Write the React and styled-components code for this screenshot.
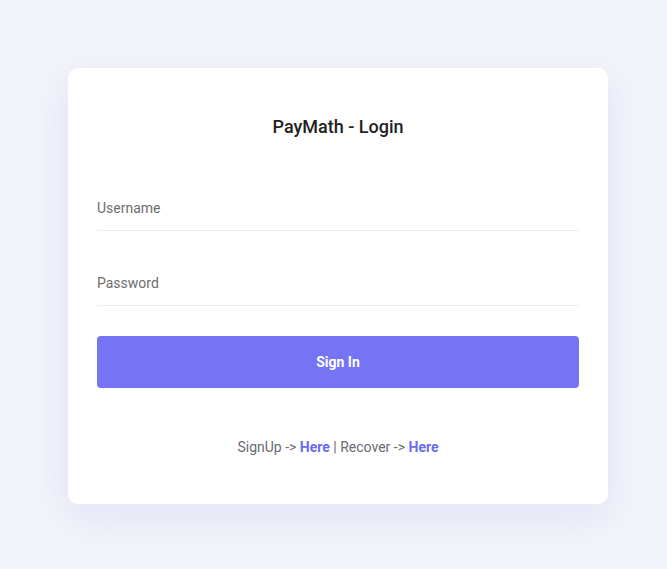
import React from "react";
import styled, { createGlobalStyle } from "styled-components";

const Global = createGlobalStyle`
  html, body { margin: 0; padding: 0; background: #f3f3fa; }
  body { font-family: Roboto, "Liberation Sans", Arial, sans-serif; }
  * { box-sizing: border-box; }
`;

const Page = styled.div`
  min-height: 569px;
  padding: 68px 0 0 68px;
`;

const Card = styled.form`
  width: 540px;
  background: #ffffff;
  border-radius: 10px;
  box-shadow: 0 12px 40px rgba(110, 110, 210, 0.12);
  padding: 49px 29px 47px;
  display: flex;
  flex-direction: column;
`;

const Title = styled.h1`
  margin: 0 0 51px;
  font-size: 18px;
  line-height: 20px;
  font-weight: 500;
  color: #222;
  text-align: center;
`;

const Input = styled.input`
  display: block;
  width: 100%;
  height: 43px;
  border: none;
  border-bottom: 1px solid #eeeef2;
  outline: none;
  padding: 0 0 2px;
  font-family: inherit;
  font-size: 14px;
  color: #333;
  background: transparent;
  margin-bottom: ${(p) => p.$gap}px;
  &::placeholder { color: #6e6e6e; }
`;

const Button = styled.button`
  height: 52px;
  width: 100%;
  border: none;
  border-radius: 4px;
  background: #7474f5;
  color: #fff;
  font-family: inherit;
  font-size: 14px;
  font-weight: 700;
  cursor: pointer;
  margin-bottom: 49px;
`;

const Footer = styled.p`
  margin: 0;
  text-align: center;
  font-size: 14px;
  line-height: 20px;
  color: #6a6a72;
`;

const Link = styled.a`
  color: #6b6bee;
  font-weight: 700;
  text-decoration: none;
`;

export default function App() {
  return (
    <>
      <Global />
      <Page>
        <Card onSubmit={(e) => e.preventDefault()}>
          <Title>PayMath - Login</Title>
          <Input $gap={32} placeholder="Username" />
          <Input $gap={30} type="password" placeholder="Password" />
          <Button type="submit">Sign In</Button>
          <Footer>
            SignUp -&gt; <Link href="#">Here</Link> | Recover -&gt; <Link href="#">Here</Link>
          </Footer>
        </Card>
      </Page>
    </>
  );
}
